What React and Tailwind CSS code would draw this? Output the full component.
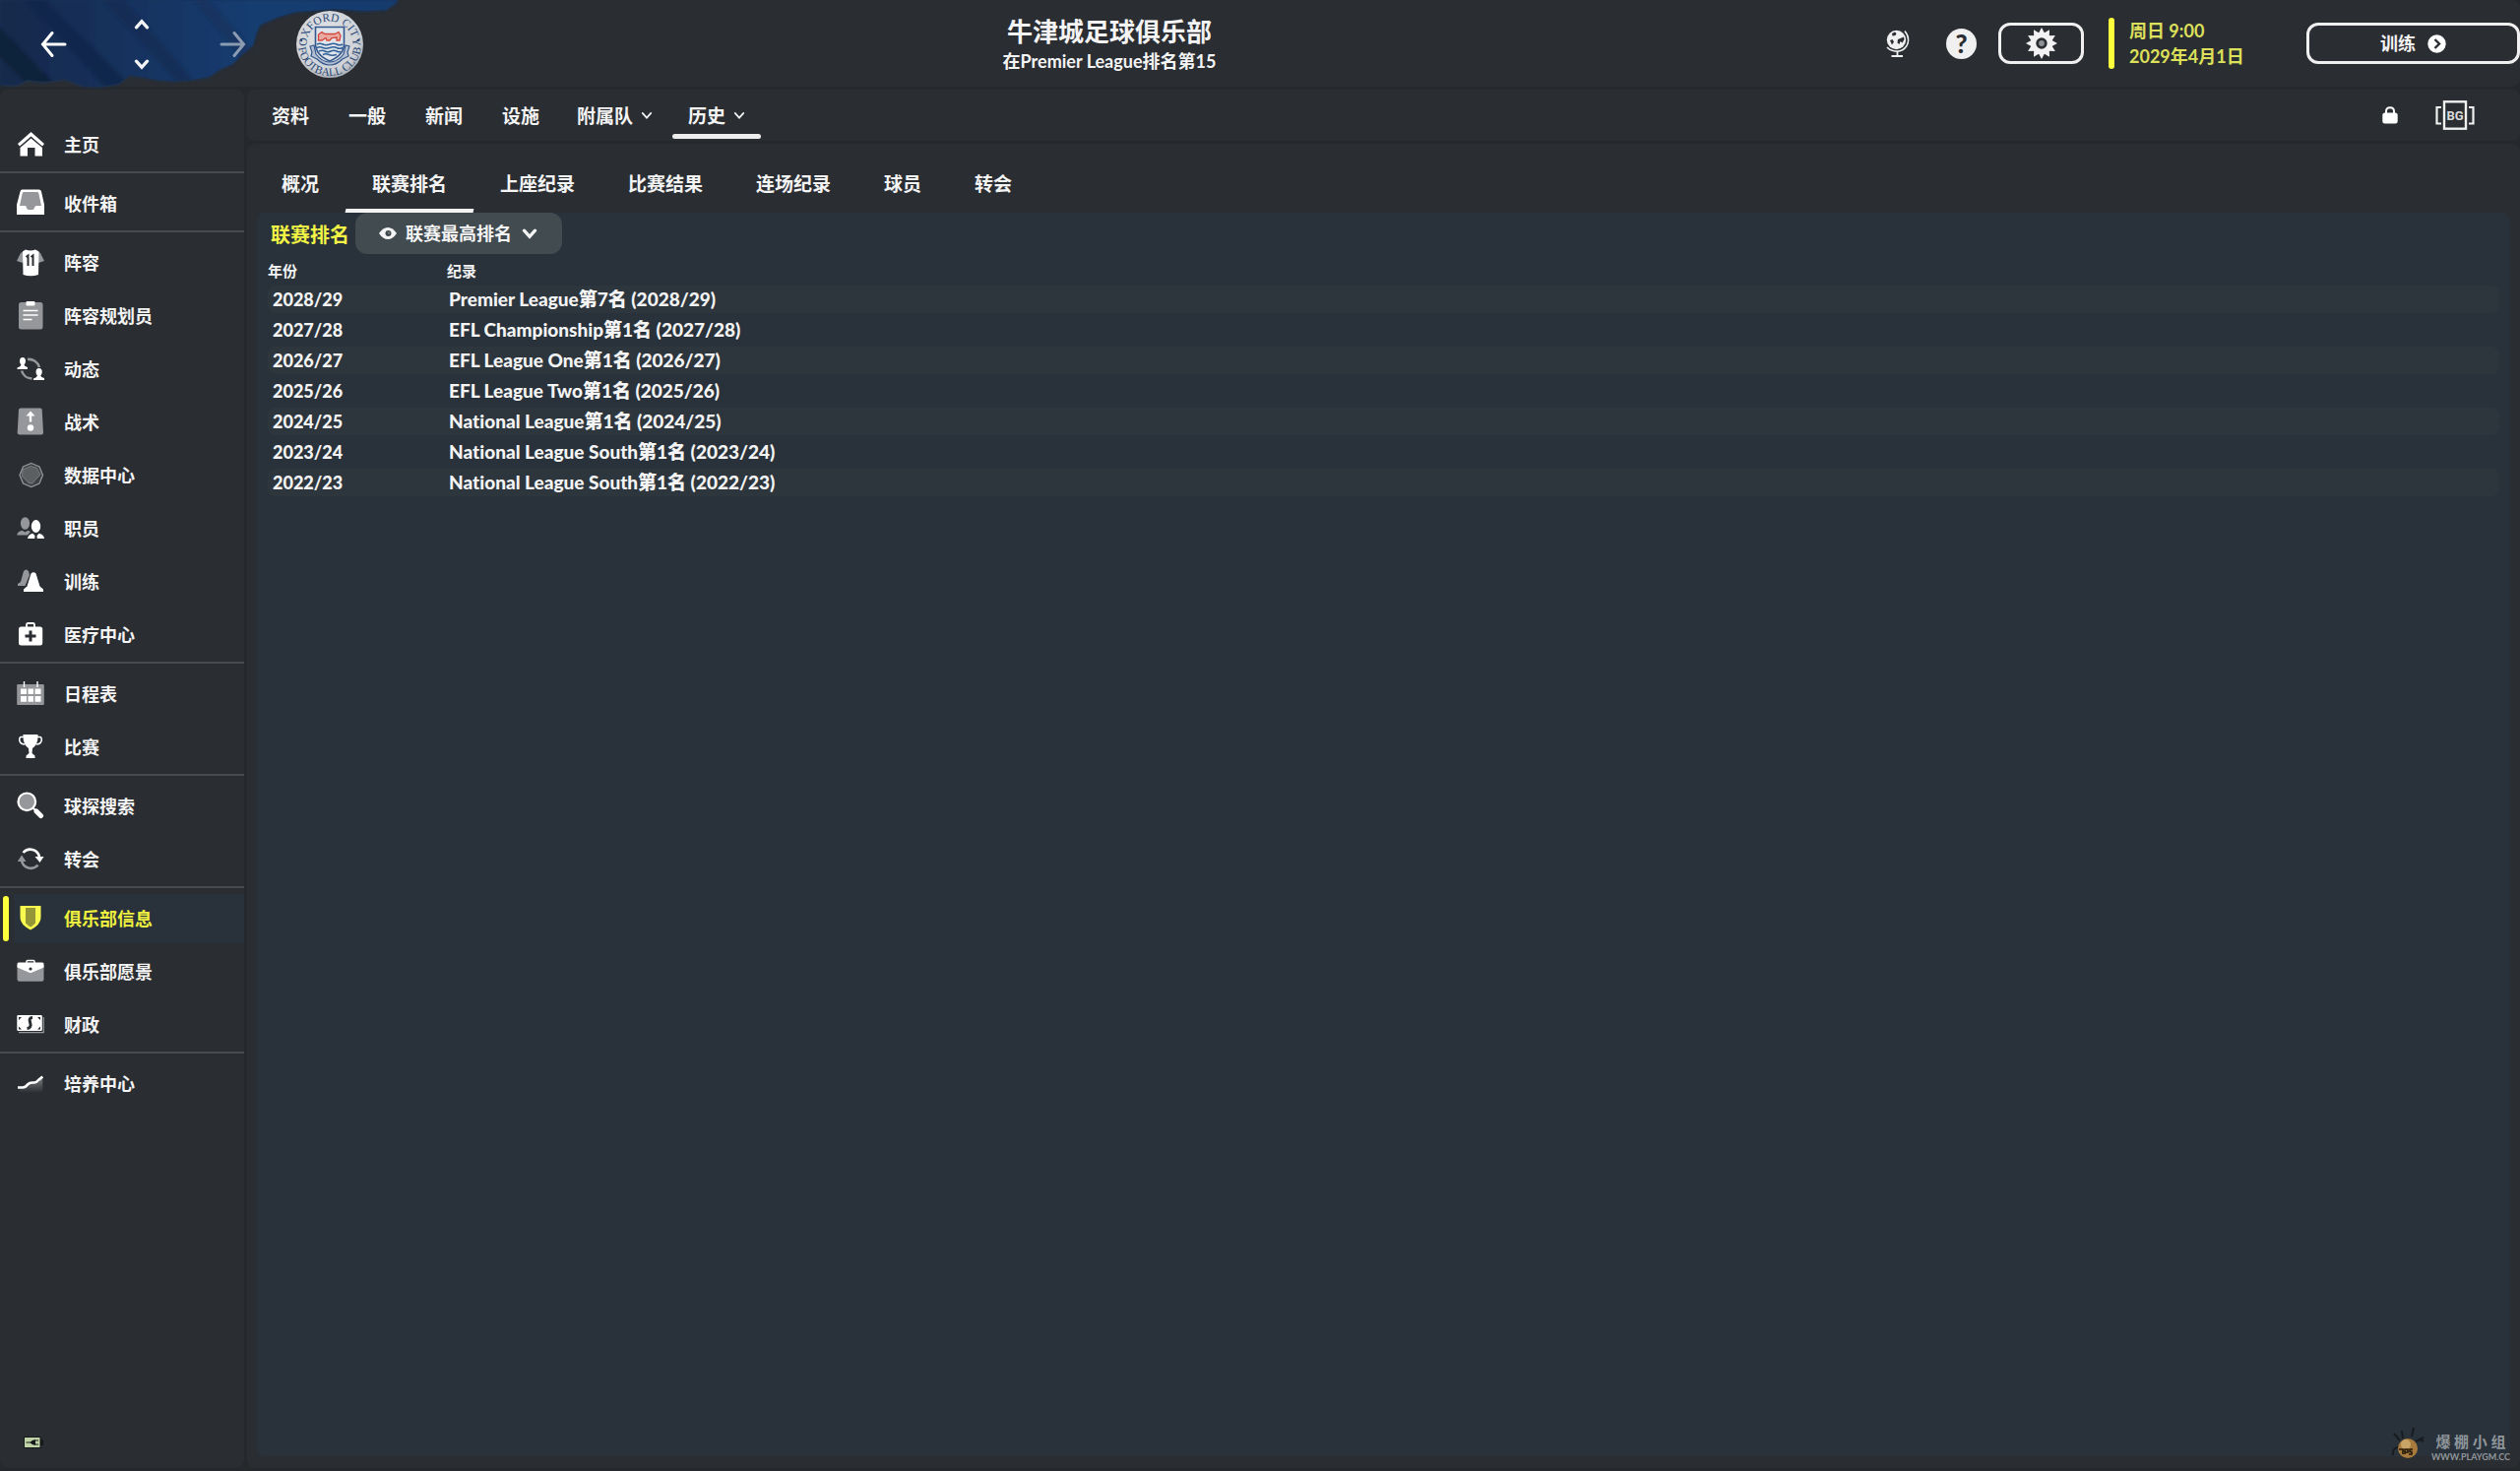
import React, { useState } from "react";

const GREY = "#95979a";
const DARK = "#2a2d31";

const icons = {
  home: (
    <>
      <path d="M14.5 2 L28 14 L26 16.5 L14.5 6.5 L3 16.5 L1 14 Z" fill="#fff" />
      <path d="M14.5 8.5 L26 18 V26.5 H18.5 V18 H11 V26.5 H3.5 V18 Z" fill="#fff" />
    </>
  ),
  inbox: (
    <>
      <path d="M5.5 0.5 H22.5 Q24.5 0.5 25 2.5 L28 16 V26 H0 V16 L3.5 2.5 Q4 0.5 5.5 0.5 Z" fill="#fff" />
      <path d="M7.5 3 H20.5 Q22 3 22.3 4.2 L25 17 H20 Q18.5 17 18 19 Q17.500 21 16 21 H12 Q10.500 21 10 19 Q9.500 17 8.500 17 H3 L5.700 4.200 Q6 3 7.500 3 Z" fill={GREY} />
    </>
  ),
  shirt: (
    <>
      <path d="M9 2 L4 5 L0 13 L6 15 L9 9 Z M19 2 L24 5 L28 13 L22 15 L19 9 Z" fill={GREY} />
      <path d="M9 1.500 Q14 3.500 19 1.500 L22.500 3.500 L22 27 Q14 29.500 6.500 27 L6 3.500 Z" fill="#fff" />
      <path d="M9.500 9 L11.500 7.500 V18 M14.500 9 L16.500 7.500 V18" stroke={DARK} strokeWidth="2" fill="none" />
    </>
  ),
  clipboard: (
    <>
      <rect x="2" y="1" width="24.500" height="27.500" rx="2.500" fill={GREY} />
      <rect x="9.500" y="0" width="9" height="4.500" rx="1" fill="#fff" />
      <path d="M6.500 9.500 H21.500 M6.500 14 H21.500 M6.500 18.500 H15.500" stroke="#fff" strokeWidth="1.500" />
    </>
  ),
  dynamics: (
    <>
      <path d="M11 5 A11 11 0 0 1 23 13" stroke={GREY} strokeWidth="2.600" fill="none" />
      <path d="M15.500 24.500 A11 11 0 0 1 5 16.500" stroke={GREY} strokeWidth="2.600" fill="none" />
      <path d="M6 3 Q9 3 9 7 Q8.800 9.500 7.500 10.500 Q8 12 11 13 V15 H0.500 V13.500 Q4 12.300 4.500 10.500 Q3 9.500 3 7 Q3 3 6 3 Z" fill="#fff" />
      <path d="M22.500 14 Q25.800 14 25.800 18 Q25.500 20.500 24.200 21.500 Q24.500 23 28 24 V26 H17 V24.500 Q20.500 23.300 21 21.500 Q19.500 20.500 19.500 18 Q19.500 14 22.500 14 Z" fill="#fff" />
    </>
  ),
  tactics: (
    <>
      <path d="M4 0.500 H24 Q25.500 0.500 25.700 2 L27 25.500 Q27 27.500 25 27.500 H3 Q0.700 27.500 0.700 25.500 L2 2 Q2.200 0.500 4 0.500 Z" fill={GREY} />
      <path d="M14 3.500 L18.500 8.500 H15.200 V14.500 H12.800 V8.500 H9.500 Z" fill="#fff" />
      <circle cx="14" cy="20.500" r="3.200" fill="#fff" />
    </>
  ),
  data: (
    <>
      <path d="M14.800 2.500 L23 6 L26.500 14.500 L23 23 L14.800 26.500 L6.500 23 L3 14.500 L6.500 6 Z" fill="#3e4144" stroke={GREY} strokeWidth="1.300" />
      <path d="M14 5.500 L20 7 L24 14 L20 18 L16 23 L12 22.500 L9 19 L5.500 16 L6 9 Z" fill="#5c5f62" stroke="#84878a" strokeWidth="0.800" />
    </>
  ),
  staff: (
    <>
      <ellipse cx="8.500" cy="9.500" rx="4.600" ry="6.300" fill={GREY} />
      <path d="M0.300 21.500 Q0.500 18 5.500 16.800 L8.500 18.500 L11.500 16.800 L14 18 L11 21.500 Z" fill={GREY} />
      <ellipse cx="19.500" cy="12.500" rx="4.700" ry="6.500" fill="#fff" />
      <path d="M11 25 Q11.300 21 16.300 19.800 L19.500 23 L22.700 19.800 Q27.800 21 28 25 Z" fill="#fff" />
      <path d="M18.700 20.500 H20.300 L20.800 25 H18.200 Z" fill={DARK} />
    </>
  ),
  training: (
    <>
      <path d="M7 4 Q9.500 1 12 4 L13 8 L8.500 19 H1 V17 L4 15 Z" fill={GREY} />
      <path d="M14.500 6.500 Q17 4 19.500 6.500 L23.500 19.500 L27 22.500 V25 H7 V22.500 L10.500 19.500 Z" fill="#fff" />
    </>
  ),
  medical: (
    <>
      <path d="M10 7 V4.500 Q10 3 11.500 3 H16.500 Q18 3 18 4.500 V7" stroke="#fff" strokeWidth="1.800" fill="none" />
      <rect x="2" y="6.500" width="24.200" height="19" rx="2.500" fill="#fff" />
      <path d="M14 10.500 V21.500 M8.500 16 H19.500" stroke={DARK} strokeWidth="3" />
    </>
  ),
  calendar: (
    <>
      <rect x="0.200" y="5" width="27.600" height="21" rx="1" fill={GREY} />
      <path d="M7.500 2 V8 M21 2 V8" stroke="#fff" strokeWidth="1.400" />
      <path d="M4 9.500 H10 V15 H4 Z M11.500 9.500 H17 V15 H11.500 Z M18.500 9.500 H24.500 V15 H18.500 Z M4 17 H10 V22.700 H4 Z M11.500 17 H17 V22.700 H11.500 Z M18.500 17 H24.500 V22.700 H18.500 Z" fill="#fff" />
    </>
  ),
  trophy: (
    <>
      <path d="M7 4.500 H4.500 Q2.500 4.500 2.800 8 Q3.500 12 8.500 12 M21 4.500 H23.500 Q25.500 4.500 25.200 8 Q24.500 12 19.500 12" stroke="#fff" strokeWidth="1.500" fill="none" />
      <path d="M6.500 2 H21.500 Q22 12 16 16 L15.500 21 L18.500 23.500 V26 H9.500 V23.500 L12.500 21 L12 16 Q6 12 6.500 2 Z" fill="#fff" />
    </>
  ),
  search: (
    <>
      <circle cx="10.300" cy="10.300" r="8.800" fill={GREY} stroke="#fff" strokeWidth="2.200" />
      <path d="M20 20 L24.500 24.500" stroke="#fff" strokeWidth="5" strokeLinecap="round" />
      <path d="M16.500 16.500 L20 20" stroke="#fff" strokeWidth="2" />
    </>
  ),
  transfer: (
    <>
      <path d="M6.500 8 A9.500 9.500 0 0 1 23 12" stroke="#fff" strokeWidth="2.600" fill="none" />
      <path d="M18.500 12 H27.500 L23.500 18 Z" fill="#fff" />
      <path d="M21.500 20.500 A9.500 9.500 0 0 1 5 16" stroke={GREY} strokeWidth="2.600" fill="none" />
      <path d="M0.800 17 H9.500 L5 10.500 Z" fill={GREY} />
    </>
  ),
  club: (
    <>
      <path d="M3.500 2 H24.500 V14 Q24.500 21 14 26.500 Q3.500 21 3.500 14 Z" fill="#f8fb4e" />
      <path d="M9 4 H19 V19.500 Q17 21.800 14 23.500 Q11 21.800 9 19.500 Z" fill="#949637" />
    </>
  ),
  vision: (
    <>
      <path d="M10 6 V4.500 Q10 3.500 11 3.500 H17 Q18 3.500 18 4.500 V6" stroke="#fff" strokeWidth="1.500" fill="none" />
      <path d="M0.500 8 H27.500 V22.500 Q27.500 24.800 25.500 24.800 H2.500 Q0.500 24.800 0.500 22.500 Z" fill={GREY} />
      <path d="M2 5.500 H26 Q27.500 5.500 27.500 7 V10.500 Q22 13 17 15 Q14 17 11 15 Q6 13 0.500 10.500 V7 Q0.500 5.500 2 5.500 Z" fill="#fff" />
      <circle cx="14" cy="12" r="1.600" fill={DARK} />
    </>
  ),
  finance: (
    <>
      <path d="M2 22.700 H27.300 V7" stroke={GREY} strokeWidth="1.200" fill="none" />
      <rect x="0.300" y="5" width="25.500" height="16" rx="1" fill="#fff" />
      <path d="M2 10 V7 H5 Z M24 10 V7 H21 Z M2 16.500 V19.500 H5 Z M24 16.500 V19.500 H21 Z" fill={DARK} />
      <path d="M16 7.500 Q12 7.500 13.500 12 Q15.500 18 10.500 18.500" stroke={DARK} strokeWidth="3" fill="none" />
    </>
  ),
  growth: (
    <>
      <defs>
        <linearGradient id="growth" x1="0" y1="0" x2="0" y2="1">
          <stop offset="0" stopColor="#b0b2b4" />
          <stop offset="1" stopColor="#2a2d31" />
        </linearGradient>
      </defs>
      <path d="M3 20 L12 16 L19 13 L26.300 8 V24 H3 Z" fill="url(#growth)" opacity="0.600" />
      <path d="M1 18.500 H6 Q9 18.500 11 15.500 Q13 13.500 16 13.500 H18 Q20 13.500 22 11 L26.300 7.500" stroke="#fff" strokeWidth="2.600" fill="none" />
    </>
  ),
};

const menu = [
  [{ icon: "home", label: "主页" }],
  [{ icon: "inbox", label: "收件箱" }],
  [
    { icon: "shirt", label: "阵容" },
    { icon: "clipboard", label: "阵容规划员" },
    { icon: "dynamics", label: "动态" },
    { icon: "tactics", label: "战术" },
    { icon: "data", label: "数据中心" },
    { icon: "staff", label: "职员" },
    { icon: "training", label: "训练" },
    { icon: "medical", label: "医疗中心" },
  ],
  [
    { icon: "calendar", label: "日程表" },
    { icon: "trophy", label: "比赛" },
  ],
  [
    { icon: "search", label: "球探搜索" },
    { icon: "transfer", label: "转会" },
  ],
  [
    { icon: "club", label: "俱乐部信息", active: true },
    { icon: "vision", label: "俱乐部愿景" },
    { icon: "finance", label: "财政" },
  ],
  [{ icon: "growth", label: "培养中心" }],
];

const mainTabs = [
  { label: "资料" },
  { label: "一般" },
  { label: "新闻" },
  { label: "设施" },
  { label: "附属队", menu: true },
  { label: "历史", menu: true, active: true },
];

const subTabs = ["概况", "联赛排名", "上座纪录", "比赛结果", "连场纪录", "球员", "转会"];

const records = [
  ["2028/29", "Premier League第7名 (2028/29)"],
  ["2027/28", "EFL Championship第1名 (2027/28)"],
  ["2026/27", "EFL League One第1名 (2026/27)"],
  ["2025/26", "EFL League Two第1名 (2025/26)"],
  ["2024/25", "National League第1名 (2024/25)"],
  ["2023/24", "National League South第1名 (2023/24)"],
  ["2022/23", "National League South第1名 (2022/23)"],
];

function Chevron({ className }) {
  return (
    <svg className={className} viewBox="0 0 14 10" fill="none" stroke="currentColor" strokeLinecap="round" aria-hidden="true">
      <path d="M2 2 L7 7.500 L12 2" />
    </svg>
  );
}

function Arrow() {
  return (
    <svg className="h-7 w-7" viewBox="0 0 28 28" fill="none" stroke="#fff" strokeWidth="3" strokeLinecap="round" aria-hidden="true">
      <path d="M25 14 H3 M12 2.500 L2.500 14 L12 25.500" />
    </svg>
  );
}

function Splash() {
  return (
    <svg className="pointer-events-none absolute top-0 left-0 h-[92px] w-[430px]" viewBox="0 0 430 92" aria-hidden="true">
      <defs>
        <linearGradient id="paint" x1="0" y1="0" x2="1" y2="0">
          <stop offset="0" stopColor="#15294a" />
          <stop offset="0.250" stopColor="#15305a" />
          <stop offset="0.600" stopColor="#193c70" />
          <stop offset="1" stopColor="#173a6c" />
        </linearGradient>
        <filter id="soft" x="-5%" y="-10%" width="110%" height="120%">
          <feGaussianBlur stdDeviation="1.600" />
        </filter>
        <clipPath id="edge">
          <path d="M0 86 L18 86 L28 81 L45 83 L66 80 L84 87 L100 88 L120 85 L132 76 L145 78 L160 81 L176 82 L194 81 L212 78 L224 70 L236 65 L246 55 L257 46 L260 34 L264 25 L283 17 L300 12 L340 9 L370 11 L392 10 L402 3 L404 0 L0 0 Z" />
        </clipPath>
      </defs>
      <path filter="url(#soft)" fill="#14305a" d="M0 87 L18 87 L28 82 L45 84 L66 81 L84 88 L100 89 L120 86 L132 77 L145 79 L160 82 L176 83 L194 82 L212 79 L224 71 L236 66 L246 56 L257 47 L261 35 L265 26 L283 18 L300 13 L340 10 L370 12 L392 11 L403 4 L405 -4 L-4 -4 Z" />
      <g clipPath="url(#edge)">
        <rect width="430" height="92" fill="url(#paint)" filter="url(#soft)" />
        <g filter="url(#soft)">
          <path d="M-6 22 L62 92 L34 92 L-6 52 Z" fill="#10203b" />
          <path d="M24 0 L46 0 L138 92 L110 92 Z" fill="#12264a" opacity="0.850" />
          <path d="M104 0 L126 0 L206 92 L188 92 Z" fill="#12284e" opacity="0.550" />
          <path d="M196 0 L212 0 L262 56 L254 70 Z" fill="#12284e" opacity="0.350" />
        </g>
      </g>
    </svg>
  );
}

function Crest() {
  return (
    <svg className="h-[70px] w-[70px]" viewBox="0 0 70 70" role="img" aria-label="Oxford City Football Club">
      <defs>
        <radialGradient id="disc" cx="0.450" cy="0.400" r="0.650">
          <stop offset="0" stopColor="#e4e6e9" />
          <stop offset="0.750" stopColor="#cfd2d6" />
          <stop offset="1" stopColor="#a0a4a9" />
        </radialGradient>
        <path id="arcTop" d="M11.500 35 A23.500 23.500 0 0 1 58.500 35" />
        <path id="arcBottom" d="M3 35 A32 32 0 0 0 67 35" />
      </defs>
      <circle cx="35" cy="35" r="34" fill="url(#disc)" />
      <g fill="#2c4a78" fontFamily="Liberation Serif" fontWeight="400" fontSize="11.500">
        <text textAnchor="middle">
          <textPath href="#arcTop" startOffset="50%">OXFORD CITY</textPath>
        </text>
        <text textAnchor="middle">
          <textPath href="#arcBottom" startOffset="50%">FOOTBALL CLUB</textPath>
        </text>
      </g>
      <circle cx="6" cy="31" r="1.300" fill="#2c4a78" />
      <circle cx="64" cy="31" r="1.300" fill="#2c4a78" />
      <path d="M15 37 L19 36 L21 45 Q27 53 35 53 Q43 53 49 45 L51 36 L55 37 L53 43 L54 47 L48 50 Q42 56 35 56 Q28 56 22 50 L16 47 L17 43 Z" fill="#b4c0d2" stroke="#34588e" strokeWidth="1.200" />
      <path d="M20.500 17.500 H49.500 V34 Q49.500 46 35 52 Q20.500 46 20.500 34 Z" fill="#dfe4ea" stroke="#34588e" strokeWidth="1.600" />
      <path d="M23.500 31 V25 L27 22.500 L30 24.500 H40 L44 22.500 L46 26 L45 31 H42 V28 L37 28.500 L35 31 H32 L31 28.500 L27 31 Z" fill="#e9a9a3" stroke="#d5473c" strokeWidth="1.300" />
      <path d="M22 35 Q25 33.500 28 35 T35 35 T42 35 T48 35 M22 38.500 Q25 37 28 38.500 T35 38.500 T42 38.500 T48 38.500 M24 42 Q27 40.500 30 42 T36 42 T42 42 T46 42 M28 45.500 Q31 44 34 45.500 T42 45.500" fill="none" stroke="#2f6098" strokeWidth="1.500" />
    </svg>
  );
}

function Gear() {
  const teeth = Array.from({ length: 12 }, (_, i) => i * 30);
  return (
    <svg className="h-8 w-8" viewBox="0 0 32 32" aria-hidden="true">
      {teeth.map((a) => (
        <path key={a} d="M12.500 6.500 L16 0 L19.500 6.500 Z" fill="#f2f2f3" transform={`rotate(${a} 16 16)`} />
      ))}
      <circle cx="16" cy="16" r="11" fill="#f2f2f3" />
      <circle cx="16" cy="16" r="4.300" fill="#8f9194" stroke={DARK} strokeWidth="2.800" />
    </svg>
  );
}

function Header() {
  return (
    <header className="relative flex h-[88px] items-center rounded-lg bg-[#2a2d31]">
      <Splash />
      <div className="relative flex w-[370px] items-center pt-0.5">
        <button type="button" aria-label="后退" className="ml-[41px] w-7">
          <Arrow />
        </button>
        <div className="ml-[67px] flex w-4 flex-col items-center gap-[30px]">
          <button type="button" aria-label="上一个">
            <Chevron className="h-[11px] w-4 rotate-180 stroke-3" />
          </button>
          <button type="button" aria-label="下一个">
            <Chevron className="h-[11px] w-4 stroke-3" />
          </button>
        </div>
        <button type="button" aria-label="前进" className="ml-[70px] w-7 rotate-180 opacity-50">
          <Arrow />
        </button>
        <div className="ml-[50px]">
          <Crest />
        </div>
      </div>

      <div className="flex flex-1 flex-col items-center pt-1">
        <h1 className="text-[26px] leading-8">牛津城足球俱乐部</h1>
        <p className="text-[18px] leading-7">在Premier League排名第15</p>
      </div>

      <div className="flex items-center pl-8">
        <button type="button" aria-label="世界">
          <svg className="h-7 w-6" viewBox="0 0 24 28" fill="none" aria-hidden="true">
            <circle cx="10.500" cy="10.500" r="9.700" fill="#f0f0f1" />
            <path d="M6 4 L9 2.500 L10.500 4 L9.500 6 L6.500 6.500 Z M4 11 L6.500 10 L8 12.500 L6 15.500 Z M12 10 L14.500 9 L18 7.500 L18.500 10 L16.500 13.500 L14.500 12 L13.500 15 L11.500 13.500 Z" fill={DARK} />
            <path d="M19 1.500 Q25 9 21 16.500 Q16 24 7 21.500 Q3 20.500 1 18" stroke="#f0f0f1" strokeWidth="1.500" />
            <path d="M11.500 22.500 V26 M5.500 27 H17" stroke="#f0f0f1" strokeWidth="1.800" />
          </svg>
        </button>
        <button
          type="button"
          aria-label="帮助"
          className="ml-[37px] h-[31px] w-[31px] rounded-full bg-[#f0f0f1] text-[26px] leading-[30px] font-black text-[#2a2d31]"
        >
          ?
        </button>
        <button
          type="button"
          aria-label="设置"
          className="ml-[22px] flex h-[42px] w-[87px] items-center justify-center rounded-xl border-3 border-[#f0f0f1]"
        >
          <Gear />
        </button>
        <div className="ml-[25px] flex items-center">
          <div className="h-[52px] w-1.5 rounded-sm bg-[#fbff3c]" />
          <div className="ml-[15px] w-[180px] text-[18px] leading-[26px] text-[#dde05a]">
            <p>周日 9:00</p>
            <p>2029年4月1日</p>
          </div>
        </div>
        <button
          type="button"
          className="flex h-[42px] w-[217px] items-center justify-center gap-3 rounded-xl border-3 border-[#f0f0f1] text-[18px]"
        >
          训练
          <svg className="h-[19px] w-[19px]" viewBox="0 0 19 19" aria-hidden="true">
            <circle cx="9.500" cy="9.500" r="9.200" fill="#fff" />
            <path d="M7.500 5 L12 9.500 L7.500 14" stroke={DARK} strokeWidth="2.400" fill="none" />
          </svg>
        </button>
      </div>
    </header>
  );
}

function Sidebar() {
  return (
    <aside className="flex w-[248px] shrink-0 flex-col rounded-lg bg-[#2a2d31] pt-[29px]">
      <nav className="flex flex-col">
        {menu.map((group, i) => (
          <div key={i} className={i > 0 ? "border-t-2 border-[#494c4f] pt-1" : ""}>
            {group.map((item) => (
              <a key={item.icon} href="#" className="flex h-[54px] items-center">
                <span className={item.active ? "mx-[3px] h-[46px] w-1.5 rounded-full bg-[#fbff3c]" : "mx-[3px] w-1.5"} />
                <span
                  className={
                    item.active
                      ? "ml-[2px] flex h-[50px] flex-1 items-center bg-[#29313a] pl-[3px] text-[#eef03f]"
                      : "ml-[2px] flex h-[50px] flex-1 items-center pl-[3px]"
                  }
                >
                  <svg className="h-[30px] w-7" viewBox="0 0 28 30" aria-hidden="true">
                    {icons[item.icon]}
                  </svg>
                  <span className="ml-5 text-[18px] leading-6">{item.label}</span>
                </span>
              </a>
            ))}
          </div>
        ))}
      </nav>
      <div className="mt-auto mb-5 pl-6">
        <svg className="h-3 w-5" viewBox="0 0 20 12" role="img" aria-label="电源">
          <rect width="17.500" height="12" fill="#16191b" />
          <rect x="17" y="3" width="3" height="6" fill="#16191b" />
          <rect x="1" y="1" width="15.500" height="10" fill="#bfd3a6" />
          <path d="M2.500 6 H8 M12 4 H15 M12 8 H15" stroke="#16191b" strokeWidth="1.200" />
          <path d="M6.500 6 Q8 3.500 12 3 V9 Q8 8.500 6.500 6 Z" fill="#16191b" />
        </svg>
      </div>
    </aside>
  );
}

function MainTabs() {
  return (
    <div className="flex h-[52px] items-center justify-between rounded-lg bg-[#2a2d31] pr-[46px] pl-[7px]">
      <nav className="flex h-full gap-1">
        {mainTabs.map((tab) => (
          <button key={tab.label} type="button" className="flex flex-col">
            <span className={tab.menu ? "flex h-[45px] items-center gap-2 px-4 pt-2" : "flex h-[45px] items-center px-[18px] pt-2"}>
              <span className="text-[19px] leading-7">{tab.label}</span>
              {tab.menu && <Chevron className="h-[9px] w-3 stroke-2" />}
            </span>
            {tab.active && <span className="h-[5px] w-full rounded-full bg-[#ededee]" />}
          </button>
        ))}
      </nav>
      <div className="flex items-center">
        <button type="button" aria-label="锁定">
          <svg className="h-[18px] w-4" viewBox="0 0 16 18" aria-hidden="true">
            <path d="M4 8 V5 Q4 1.200 8 1.200 Q12 1.200 12 5 V8" stroke="#fff" strokeWidth="2" fill="none" />
            <rect x="0.300" y="6.500" width="15.400" height="11" rx="2.500" fill="#fff" />
          </svg>
        </button>
        <button type="button" aria-label="BG" className="ml-[38px]">
          <svg className="h-[30px] w-10" viewBox="0 0 40 30" fill="none" stroke="#f0f0f1" aria-hidden="true">
            <path d="M6 7 H1.500 V23.500 H6 M34 7 H38.500 V23.500 H34" strokeWidth="2.200" />
            <rect x="9" y="1.300" width="22" height="27.400" strokeWidth="2.400" />
            <text x="20" y="20" textAnchor="middle" fontFamily="Roboto" fontWeight="700" fontSize="13" fill="#d9dadb" stroke="none">
              BG
            </text>
          </svg>
        </button>
      </div>
    </div>
  );
}

function Records() {
  return (
    <table className="mt-0.5 w-full border-separate border-spacing-x-0 border-spacing-y-[3px] text-left">
      <thead>
        <tr className="h-6 text-[15px] leading-5">
          <th scope="col" className="w-[182px] p-0 font-bold">年份</th>
          <th scope="col" className="p-0 font-bold">纪录</th>
        </tr>
      </thead>
      <tbody className="font-black">
        {records.map(([year, record]) => (
          <tr key={year} className="h-7 leading-7 odd:bg-[#2d363d]">
            <td className="rounded-l-lg py-0 pr-0 pl-[5px] text-[18px]">{year}</td>
            <td className="rounded-r-lg py-0 pr-0 pl-[2px] text-[19px]">{record}</td>
          </tr>
        ))}
      </tbody>
    </table>
  );
}

export default function App() {
  const [tab, setTab] = useState("联赛排名");
  const [view, setView] = useState("best");

  return (
    <div className="relative flex min-h-screen flex-col gap-[3px] bg-[#26292c] pb-[3px] font-['Lato','Noto_Sans_CJK_SC',sans-serif] font-bold text-[#f4f4f5] [font-variant-ligatures:none]">
      <Header />
      <div className="flex flex-1 gap-[3px]">
        <Sidebar />
        <main className="flex min-w-0 flex-1 flex-col gap-[3px]">
          <MainTabs />
          <section className="flex flex-1 flex-col rounded-lg bg-[#2a2d31] px-2.5 pb-3">
            <nav className="flex h-[70px] pr-3">
              {subTabs.map((label, i) => (
                <button
                  key={label}
                  type="button"
                  onClick={() => setTab(label)}
                  className={i === 0 ? "flex flex-col pl-[25px]" : "flex flex-col"}
                >
                  <span className={i === 0 ? "flex h-[66px] items-center pt-4 pr-[27px] text-[19px]" : "flex h-[66px] items-center px-[27px] pt-4 text-[19px]"}>
                    {label}
                  </span>
                  {tab === label && <span className="h-1 w-full -skew-x-12 bg-[#f4f4f5]" />}
                </button>
              ))}
            </nav>
            <div className="flex-1 rounded-lg bg-[#29323a] px-[11px]">
              <div className="flex items-center">
                <h2 className="w-[89px] pt-0.5 pl-[3px] text-[20px] text-[#f2f545]">联赛排名</h2>
                <label className="flex h-[42px] w-[210px] items-center rounded-xl bg-[#414b50] pl-6">
                  <svg className="h-3 w-[18px]" viewBox="0 0 18 12" aria-hidden="true">
                    <path d="M0 6 Q4 0 9 0 Q14 0 18 6 Q14 12 9 12 Q4 12 0 6 Z" fill="#f4f4f5" />
                    <circle cx="9.500" cy="6" r="3" fill="#3f484d" />
                    <circle cx="10" cy="5.500" r="1.200" fill="#6c7478" />
                  </svg>
                  <select
                    aria-label="联赛排名显示方式"
                    value={view}
                    onChange={(e) => setView(e.target.value)}
                    className="ml-[9px] appearance-none bg-transparent text-[18px] font-bold outline-none"
                  >
                    <option value="best">联赛最高排名</option>
                  </select>
                  <Chevron className="ml-2.5 h-[11px] w-4 stroke-3" />
                </label>
              </div>
              <Records />
            </div>
          </section>
        </main>
      </div>

      <div className="pointer-events-none absolute right-2.5 bottom-2 flex items-end gap-1.5">
        <svg className="h-10 w-9" viewBox="0 0 36 40" aria-hidden="true">
          <path d="M10 17 L4 10 M13 15 L12 7 M22 13 L24 4 M26 18 L34 14 M9 24 Q2 24 3 32 M30 16 L34 18" stroke="#171c20" strokeWidth="2" fill="none" />
          <circle cx="18" cy="25" r="10" fill="#a87b3c" />
          <circle cx="16" cy="21" r="5" fill="#c9a467" />
          <path d="M9 26 H13 V31 M15 31 V26 H18 V29 H15 M23 26 H20 V28.500 H22 V31 H19" stroke="#241a0c" strokeWidth="1.600" fill="none" />
        </svg>
        <div className="text-[#8f969b]">
          <p className="text-center text-[15px] leading-5">爆 棚 小 组</p>
          <p className="text-[9px] leading-3">WWW.PLAYGM.CC</p>
        </div>
      </div>
    </div>
  );
}
